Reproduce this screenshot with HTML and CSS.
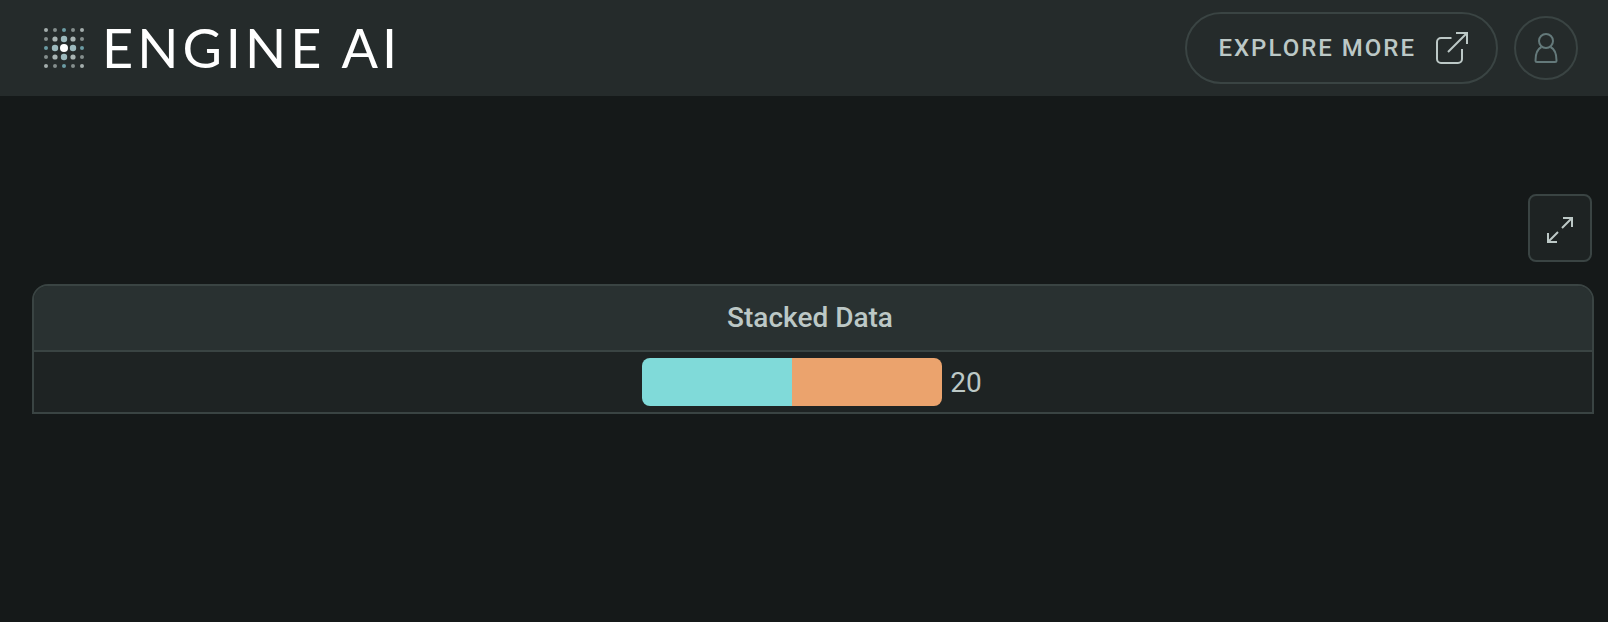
FILE: index.html
```html
<!DOCTYPE html>
<html lang="en">
<head>
<meta charset="UTF-8">
<meta name="viewport" content="width=device-width, initial-scale=1.0">
<title>Engine AI - Stacked Data</title>
<link rel="stylesheet" href="styles.css">
</head>
<body>

<header class="header">
    <a class="logo" href="#">
        <svg class="logo-mark" width="44" height="44" viewBox="0 0 44 44" aria-hidden="true">
            <g fill="#a3adac">
                <circle cx="4" cy="4" r="2"/>
                <circle cx="40" cy="4" r="2"/>
                <circle cx="4" cy="40" r="2"/>
                <circle cx="40" cy="40" r="2"/>
            </g>
            <g fill="#848d8c">
                <circle cx="13" cy="4" r="2"/>
                <circle cx="31" cy="4" r="2"/>
                <circle cx="4" cy="13" r="2"/>
                <circle cx="40" cy="13" r="2"/>
                <circle cx="4" cy="31" r="2"/>
                <circle cx="40" cy="31" r="2"/>
                <circle cx="13" cy="40" r="2"/>
                <circle cx="31" cy="40" r="2"/>
            </g>
            <g fill="#6b9ba3">
                <circle cx="22" cy="4" r="2"/>
                <circle cx="4" cy="22" r="2"/>
                <circle cx="40" cy="22" r="2"/>
                <circle cx="22" cy="40" r="2"/>
            </g>
            <g fill="#a9b4b3">
                <circle cx="13" cy="13" r="2.6"/>
                <circle cx="31" cy="13" r="2.6"/>
                <circle cx="13" cy="31" r="2.6"/>
                <circle cx="31" cy="31" r="2.6"/>
            </g>
            <g fill="#9cb9bd">
                <circle cx="22" cy="13" r="3.2"/>
                <circle cx="13" cy="22" r="3.2"/>
                <circle cx="31" cy="22" r="3.2"/>
                <circle cx="22" cy="31" r="3.2"/>
            </g>
            <circle cx="22" cy="22" r="4" fill="#fff"/>
        </svg>
        <span class="logo-text">ENGINE AI</span>
    </a>
    <div class="header-actions">
        <a class="explore" href="#">
            Explore more
            <svg width="32" height="32" viewBox="0 0 32 32" fill="none" stroke="currentColor" stroke-width="2" aria-hidden="true">
                <path d="M15.500 6H5a4 4 0 0 0-4 4v17a4 4 0 0 0 4 4h17a4 4 0 0 0 4-4V17"/>
                <path d="M12 20L31 1M20 1h11v11"/>
            </svg>
        </a>
        <button class="profile" type="button" aria-label="Profile">
            <svg width="24" height="32" viewBox="0 0 24 32" fill="none" stroke="currentColor" stroke-width="2" aria-hidden="true">
                <circle cx="12" cy="9" r="7"/>
                <path d="M7.500 15C3.500 17 1.500 21.500 1.500 28.500a1.500 1.500 0 0 0 1.500 1.500h18a1.500 1.500 0 0 0 1.500-1.500C22.500 21.500 20.500 17 16.500 15"/>
            </svg>
        </button>
    </div>
</header>

<main class="content">
    <div class="toolbar">
        <button class="expand" type="button" aria-label="Full screen">
            <svg width="28" height="28" viewBox="0 0 28 28" fill="none" stroke="currentColor" stroke-width="2" aria-hidden="true">
                <path d="M16 12L26 2M17 2h9v9"/>
                <path d="M12 16L2 26M2 17v9h9"/>
            </svg>
        </button>
    </div>
    <table class="grid">
        <thead>
            <tr><th scope="col">Stacked Data</th></tr>
        </thead>
        <tbody>
            <tr>
                <td>
                    <div class="stack">
                        <div class="bar">
                            <div class="segment segment-teal" style="width: 50%"></div>
                            <div class="segment segment-orange" style="width: 50%"></div>
                        </div>
                        <span>20</span>
                    </div>
                </td>
            </tr>
        </tbody>
    </table>
</main>

</body>
</html>
```
FILE: styles.css
```css
* {
    box-sizing: border-box;
}

body {
    margin: 0;
    background-color: #151919;
    color: #bcc8c6;
    font-family: Roboto, "Liberation Sans", sans-serif;
    font-size: 28px;
}

button {
    padding: 0;
    cursor: pointer;
}

/* Header */
.header {
    display: flex;
    justify-content: space-between;
    align-items: center;
    height: 96px;
    padding: 0 30px 0 42px;
    background-color: #252b2b;
}

.logo {
    display: flex;
    align-items: center;
    gap: 16px;
    color: #fff;
    text-decoration: none;
}

.logo-text {
    font-family: Lato, sans-serif;
    font-size: 54px;
    line-height: 64px;
    letter-spacing: 4px;
}

.header-actions {
    display: flex;
    align-items: center;
    gap: 16px;
}

.explore {
    display: flex;
    align-items: center;
    gap: 20px;
    height: 72px;
    padding: 0 28px 0 31px;
    border: 2px solid #3a4443;
    border-radius: 36px;
    color: #bcc8c6;
    font-size: 24px;
    font-weight: 500;
    letter-spacing: 2px;
    text-decoration: none;
    text-transform: uppercase;
}

.profile {
    display: flex;
    justify-content: center;
    align-items: center;
    width: 64px;
    height: 64px;
    border: 2px solid #3a4443;
    border-radius: 50%;
    background: none;
    color: #64797a;
}

/* Content */
.content {
    padding: 98px 14px 0 32px;
}

.toolbar {
    display: flex;
    justify-content: flex-end;
    margin-bottom: 22px;
    padding-right: 2px;
}

.expand {
    display: flex;
    justify-content: center;
    align-items: center;
    width: 64px;
    height: 68px;
    padding-top: 4px;
    border: 2px solid #3a4443;
    border-radius: 8px;
    background-color: #1e2323;
    color: #bcc8c6;
}

/* Table */
.grid {
    width: 100%;
    border: 2px solid #3a4443;
    border-radius: 16px 16px 0 0;
    border-spacing: 0;
    background-color: #1e2323;
    overflow: hidden;
}

.grid th {
    height: 66px;
    padding: 0 6px 2px 0;
    border-bottom: 2px solid #3a4443;
    background-color: #293131;
    font-weight: 500;
}

.grid td {
    padding: 6px 2px 6px 0;
}

.stack {
    display: flex;
    justify-content: center;
    align-items: center;
    gap: 8px;
}

.bar {
    display: flex;
    width: 300px;
    height: 48px;
    border-radius: 8px;
    overflow: hidden;
}

.segment-teal {
    background-color: #80dad9;
}

.segment-orange {
    background-color: #eba36d;
}
```
